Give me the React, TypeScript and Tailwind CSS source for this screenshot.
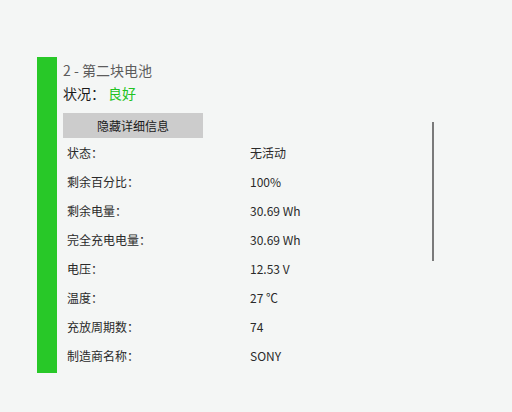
const rows: [string, string][] = [
  ["状态：", "无活动"],
  ["剩余百分比：", "100%"],
  ["剩余电量：", "30.69 Wh"],
  ["完全充电电量：", "30.69 Wh"],
  ["电压：", "12.53 V"],
  ["温度：", "27 ℃"],
  ["充放周期数：", "74"],
  ["制造商名称：", "SONY"],
];

export default function App() {
  return (
    <div
      className="relative w-[512px] h-[412px] bg-[#f4f6f5] pt-[57px] pl-[37px] overflow-hidden"
      style={{ fontFamily: '"Microsoft YaHei", "Noto Sans CJK SC", "Noto Sans", sans-serif' }}
    >
      <div className="flex h-[316px]">
        <div className="w-[20px] bg-[#28c828]" />
        <div className="flex flex-col pl-[6px]">
          <div className="text-[14px] leading-[26px] text-[#5c5c5c]">2 - 第二块电池</div>
          <div className="flex text-[14px] leading-[20px] text-[#1a1a1a]">
            <span className="w-[45px]">状况：</span>
            <span className="text-[#22c322]">良好</span>
          </div>
          <div className="mt-[10px] w-[140px] h-[25px] bg-[#cccccc] flex items-center justify-center text-[12px] text-[#1a1a1a]">
            隐藏详细信息
          </div>
          <div className="flex flex-col pl-[4px]">
            {rows.map(([k, v]) => (
              <div key={k} className="flex h-[29px] items-center text-[12px] text-[#2a2a2a]">
                <span className="w-[183px]">{k}</span>
                <span>{v}</span>
              </div>
            ))}
          </div>
        </div>
      </div>
      <div className="absolute left-[432px] top-[122px] w-[2px] h-[139px] bg-[#7a7a7a]" />
    </div>
  );
}
